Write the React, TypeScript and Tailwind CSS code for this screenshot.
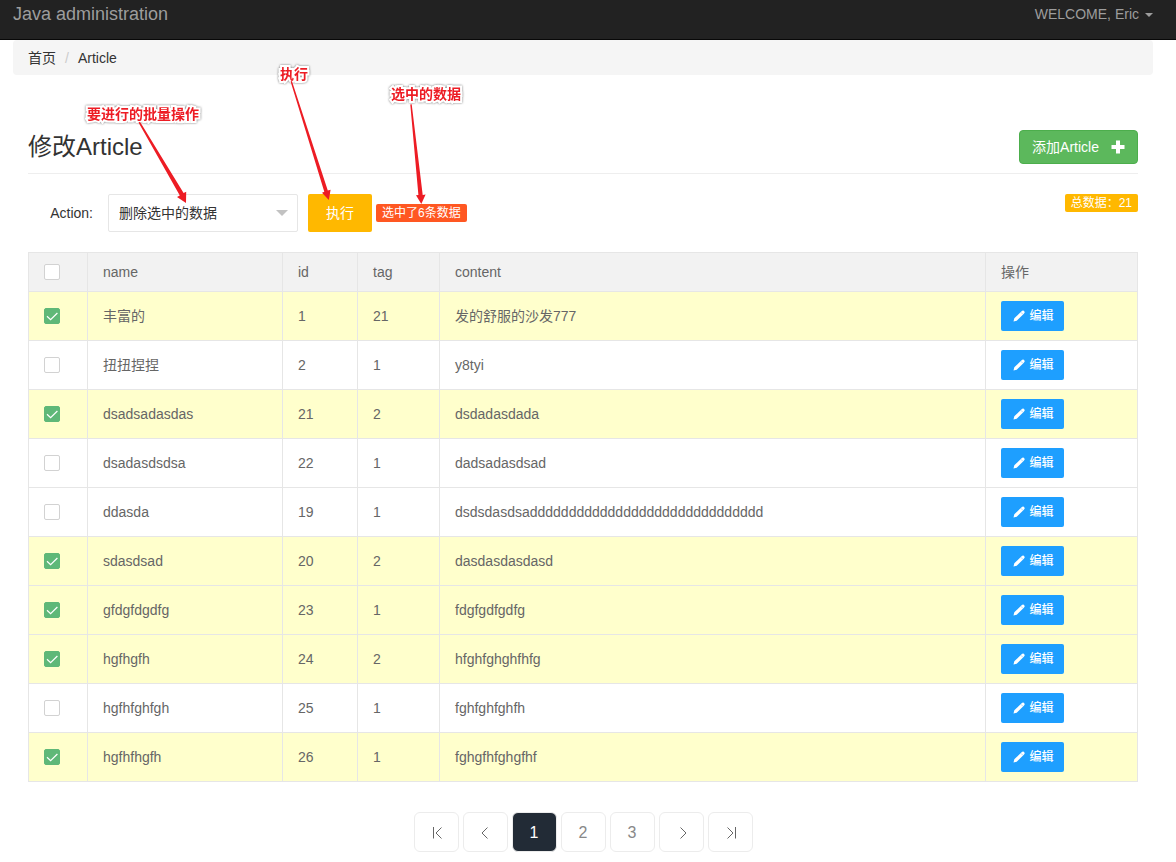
import { useState } from "react";

type Article = {
  name: string;
  id: number;
  tag: number;
  content: string;
};

const articles: Article[] = [
  { name: "丰富的", id: 1, tag: 21, content: "发的舒服的沙发777" },
  { name: "扭扭捏捏", id: 2, tag: 1, content: "y8tyi" },
  { name: "dsadsadasdas", id: 21, tag: 2, content: "dsdadasdada" },
  { name: "dsadasdsdsa", id: 22, tag: 1, content: "dadsadasdsad" },
  { name: "ddasda", id: 19, tag: 1, content: "dsdsdasdsadddddddddddddddddddddddddddddd" },
  { name: "sdasdsad", id: 20, tag: 2, content: "dasdasdasdasd" },
  { name: "gfdgfdgdfg", id: 23, tag: 1, content: "fdgfgdfgdfg" },
  { name: "hgfhgfh", id: 24, tag: 2, content: "hfghfghghfhfg" },
  { name: "hgfhfghfgh", id: 25, tag: 1, content: "fghfghfghfh" },
  { name: "hgfhfhgfh", id: 26, tag: 1, content: "fghgfhfghgfhf" },
];

function Tick({ label, checked, onChange }: { label: string; checked: boolean; onChange: () => void }) {
  return (
    <label className="grid size-4 cursor-pointer">
      <input
        type="checkbox"
        aria-label={label}
        checked={checked}
        onChange={onChange}
        className="col-start-1 row-start-1 size-4 appearance-none rounded-xs border border-[#d2d2d2] bg-white checked:border-[#5fb878] checked:bg-[#5fb878]"
      />
      {checked && (
        <svg viewBox="0 0 16 16" className="pointer-events-none col-start-1 row-start-1 size-4" fill="none" stroke="#fff" strokeWidth="1.2">
          <path d="M3 8.2 6.6 11.6 13.4 5" />
        </svg>
      )}
    </label>
  );
}

function Pencil() {
  return (
    <svg viewBox="0 0 12 12" className="size-3" fill="#fff">
      <path d="M0.500 11.600 1.300 8.300 8.300 1.500 9.300 0.700Q10.100 0.100 10.800 0.800L11.400 1.400Q12 2.200 11.400 2.900L10.600 3.900 3.700 10.700Z" />
      <path d="M7.900 2.300 9.900 4.300" stroke="#1e9fff" strokeWidth="0.4" />
    </svg>
  );
}

const arrowIcons = {
  first: "M4.5 2V13.500M12.500 2.500 7 8 12.500 13.500",
  prev: "M9.500 2.500 4 8 9.500 13.500",
  next: "M6.500 2.500 12 8 6.500 13.500",
  last: "M4.500 2.500 10 8 4.500 13.500M12.500 2V13.500",
};

function PageArrow({ kind, label }: { kind: keyof typeof arrowIcons; label: string }) {
  return (
    <button
      type="button"
      aria-label={label}
      className="flex h-10 w-[45px] items-center justify-center rounded-md border border-[#ececec] bg-white pt-0.5 pl-0.5"
    >
      <svg viewBox="0 0 16 16" className="size-4" fill="none" stroke="#666" strokeWidth="1">
        <path d={arrowIcons[kind]} />
      </svg>
    </button>
  );
}

function Notes() {
  const note =
    "absolute text-sm leading-4 font-bold whitespace-nowrap text-[#ed1c24] drop-shadow-[0_0_1px_#777] [-webkit-text-stroke:4px_#fff] [paint-order:stroke_fill]";
  return (
    <div className="pointer-events-none absolute inset-0">
      <span className={`${note} top-[106px] left-[87px]`}>要进行的批量操作</span>
      <span className={`${note} top-[66px] left-[280px]`}>执行</span>
      <span className={`${note} top-[86px] left-[391px]`}>选中的数据</span>
      <svg width="480" height="240" viewBox="0 0 480 240" className="absolute top-0 left-0" fill="#ed1c24">
        <path d="M138.500 122.500 140 121.700 183.600 193.100 186.200 191.800 186 203 177 196.900 179.800 195.500Z" />
        <path d="M290.600 81.500 291.900 81 327.800 190.600 330.600 189.700 328.800 200 322 192.700 324.300 191.800Z" />
        <path d="M410.300 104.500 411.700 104.300 422.700 194.900 425.600 194.600 421.300 204 416 195.300 418.400 195Z" />
      </svg>
    </div>
  );
}

export default function App() {
  const [selected, setSelected] = useState<number[]>([1, 21, 20, 23, 24, 26]);
  const [page, setPage] = useState(1);
  const all = selected.length === articles.length;

  const toggle = (id: number) =>
    setSelected((ids) => (ids.includes(id) ? ids.filter((x) => x !== id) : [...ids, id]));

  return (
    <div className="relative bg-white font-['Liberation_Sans','Noto_Sans_CJK_SC',sans-serif] text-sm leading-5 text-[#333]">
      <header className="flex h-10 justify-between border-b border-[#080808] bg-[#222] pr-[23px] pl-[13px] text-[#9d9d9d]">
        <a href="#home" className="pt-1 text-lg leading-5">
          Java administration
        </a>
        <button type="button" className="flex h-7 items-center gap-1.5">
          WELCOME, Eric
          <svg viewBox="0 0 8 4" className="mt-0.5 h-1 w-2" fill="currentColor">
            <path d="M0 0H8L4 4Z" />
          </svg>
        </button>
      </header>

      <div className="pr-[23px] pl-[13px]">
        <nav className="flex h-[35px] items-center rounded bg-[#f5f5f5] px-[15px]">
          <a href="#index">首页</a>
          <span className="px-[9px] text-[#ccc]">/</span>
          <a href="#article">Article</a>
        </nav>

        <main className="px-[15px]">
          <div className="mt-[55px] flex items-center justify-between border-b border-[#eee] pb-[9px]">
            <h1 className="text-2xl leading-8">修改Article</h1>
            <button
              type="button"
              className="flex h-[34px] items-center gap-3 rounded border border-[#4cae4c] bg-[#5cb85c] px-3 text-white"
            >
              添加Article
              <svg viewBox="0 0 14 14" className="size-3.5" fill="currentColor">
                <path d="M5 0.500H9V5H13.500V9H9V13.500H5V9H0.500V5H5Z" />
              </svg>
            </button>
          </div>

          <form className="mt-5 flex items-start" onSubmit={(e) => e.preventDefault()}>
            <label htmlFor="action" className="w-20 px-[15px] py-[9px] text-right">
              Action:
            </label>
            <div className="grid w-[190px] items-center">
              <select
                id="action"
                className="col-start-1 row-start-1 h-[38px] w-full appearance-none rounded-xs border border-[#e6e6e6] bg-white pr-8 pl-2.5"
              >
                <option>删除选中的数据</option>
              </select>
              <svg viewBox="0 0 12 6" className="pointer-events-none col-start-1 row-start-1 mr-2.5 h-1.5 w-3 justify-self-end" fill="#c2c2c2">
                <path d="M0 0H12L6 6Z" />
              </svg>
            </div>
            <button type="submit" className="ml-2.5 h-[38px] w-16 rounded-xs bg-[#ffb800] text-white">
              执行
            </button>
            <span className="mt-2.5 ml-1 rounded-xs bg-[#ff5722] px-1.5 text-xs leading-[18px] text-white">
              选中了{selected.length}条数据
            </span>
            <span className="ml-auto rounded-xs bg-[#ffb800] px-1.5 text-xs leading-[18px] text-white">总数据：21</span>
          </form>

          <table className="mt-5 w-full table-fixed border-collapse text-left text-[#666] [&_td]:border [&_td]:border-[#e6e6e6] [&_td]:px-[15px] [&_th]:border [&_th]:border-[#e6e6e6] [&_th]:px-[15px] [&_th]:font-normal">
            <colgroup>
              <col className="w-[59px]" />
              <col className="w-[195px]" />
              <col className="w-[75px]" />
              <col className="w-[82px]" />
              <col />
              <col className="w-[152px]" />
            </colgroup>
            <thead>
              <tr className="h-[39px] bg-[#f2f2f2]">
                <th>
                  <Tick label="全选" checked={all} onChange={() => setSelected(all ? [] : articles.map((a) => a.id))} />
                </th>
                <th>name</th>
                <th>id</th>
                <th>tag</th>
                <th>content</th>
                <th>操作</th>
              </tr>
            </thead>
            <tbody>
              {articles.map((a) => {
                const on = selected.includes(a.id);
                return (
                  <tr key={a.id} className={on ? "h-[49px] bg-[#ffffcc]" : "h-[49px] bg-white"}>
                    <td>
                      <Tick label={a.name} checked={on} onChange={() => toggle(a.id)} />
                    </td>
                    <td>{a.name}</td>
                    <td>{a.id}</td>
                    <td>{a.tag}</td>
                    <td>{a.content}</td>
                    <td>
                      <button
                        type="button"
                        className="flex h-[30px] w-[63px] items-center justify-center gap-1 rounded-xs bg-[#1e9fff] pl-0.5 text-xs font-medium text-white"
                      >
                        <Pencil />
                        编辑
                      </button>
                    </td>
                  </tr>
                );
              })}
            </tbody>
          </table>

          <nav className="mt-[30px] flex justify-center gap-1 pb-2.5">
            <PageArrow kind="first" label="首页" />
            <PageArrow kind="prev" label="上一页" />
            {[1, 2, 3].map((n) => (
              <button
                key={n}
                type="button"
                onClick={() => setPage(n)}
                className={
                  n === page
                    ? "h-10 w-[45px] rounded-md border border-[#ececec] bg-[#222b36] pt-0.5 text-base text-white"
                    : "h-10 w-[45px] rounded-md border border-[#ececec] bg-white pt-0.5 text-base text-[#888]"
                }
              >
                {n}
              </button>
            ))}
            <PageArrow kind="next" label="下一页" />
            <PageArrow kind="last" label="尾页" />
          </nav>
        </main>
      </div>
      <Notes />
    </div>
  );
}
